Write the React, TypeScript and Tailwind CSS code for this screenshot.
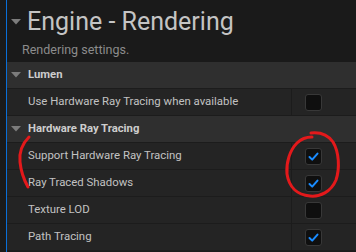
import React from 'react';

interface Row {
  label: string;
  checked: boolean;
}

const sections: { title: string; rows: Row[] }[] = [
  { title: 'Lumen', rows: [{ label: 'Use Hardware Ray Tracing when available', checked: false }] },
  {
    title: 'Hardware Ray Tracing',
    rows: [
      { label: 'Support Hardware Ray Tracing', checked: true },
      { label: 'Ray Traced Shadows', checked: true },
      { label: 'Texture LOD', checked: false },
      { label: 'Path Tracing', checked: true },
    ],
  },
];

function Caret() {
  return (
    <svg width="10" height="6" viewBox="0 0 10 6" className="shrink-0">
      <path d="M0 0 L10 0 L5 5.5 Z" fill="#7c7c7c" />
    </svg>
  );
}

function Checkbox({ checked }: { checked: boolean }) {
  return (
    <div className="w-[17px] h-[17px] rounded-[3px] bg-[#0f0f0f] border border-[#383838] flex items-center justify-center">
      {checked && (
        <svg width="13" height="13" viewBox="0 0 13 13">
          <path d="M2.5 7 L5.2 9.6 L10.5 3.6" fill="none" stroke="#1a8cff" strokeWidth="2" strokeLinecap="round" strokeLinejoin="round" />
        </svg>
      )}
    </div>
  );
}

export default function App() {
  return (
    <div className="relative w-[356px] h-[252px] overflow-hidden bg-[#1a1a1a] flex" style={{ fontFamily: 'Roboto, "Noto Sans", sans-serif' }}>
      <div className="w-[6px] shrink-0" />
      <div className="w-px shrink-0 bg-[#0a6fd8]" />

      <div className="flex-1 flex flex-col">
        {/* Header */}
        <div className="h-[62px] shrink-0">
          <div className="flex items-center pl-[4px] pt-[8px] h-[35px]">
            <Caret />
            <span className="ml-[6px] text-[25px] leading-none text-[#c4c4c4]">Engine - Rendering</span>
          </div>
          <div className="pl-[15px] pt-[9px] text-[12.5px] leading-none text-[#8c8c8c]">Rendering settings.</div>
        </div>

        {sections.map((s) => (
          <div key={s.title}>
            <div className="h-[27px] flex items-center pl-[4px] bg-[#2f2f2f] border-b border-[#1c1c1c]">
              <Caret />
              <span className="ml-[7px] text-[11.3px] font-bold text-[#cdcdcd]">{s.title}</span>
            </div>
            {s.rows.map((r) => (
              <div key={r.label} className="h-[27px] flex bg-[#242424] border-b border-[#1c1c1c]">
                <div className="w-[284px] flex items-center pl-[21px] text-[11.4px] text-[#c2c2c2]">{r.label}</div>
                <div className="flex-1 flex items-center pl-[13px] border-l border-[#1c1c1c]">
                  <Checkbox checked={r.checked} />
                </div>
              </div>
            ))}
          </div>
        ))}
      </div>

      {/* red annotations */}
      <svg className="absolute left-0 top-0 pointer-events-none" width="356" height="252" viewBox="0 0 356 252">
        <path d="M29 137 C22 144 19 153 20 162 C21 172 24 180 28 187" fill="none" stroke="#e3191b" strokeWidth="3" strokeLinecap="round" />
        <path
          d="M311 133 C320 132 328 135 333 142 C339 152 340 168 336 180 C331 192 320 197 310 196 C297 195 289 187 287 174 C286 162 290 150 297 143 C301 139 306 137 312 137"
          fill="none"
          stroke="#e3191b"
          strokeWidth="3"
          strokeLinecap="round"
        />
      </svg>
    </div>
  );
}
